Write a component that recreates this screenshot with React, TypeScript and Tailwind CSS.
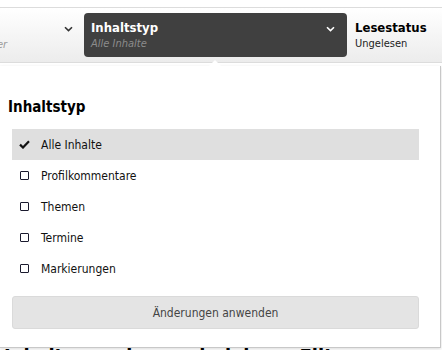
import { useState } from "react";

const font = { fontFamily: '"DejaVu Sans Condensed", "DejaVu Sans", Tahoma, sans-serif' };

const types = ["Alle Inhalte", "Profilkommentare", "Themen", "Termine", "Markierungen"];

function Chevron({ className }: { className: string }) {
  return (
    <svg width="9" height="6" viewBox="0 0 9 6" className={className}>
      <path d="M1 1.2 L4.5 4.6 L8 1.2" fill="none" stroke="currentColor" strokeWidth="1.6" />
    </svg>
  );
}

export default function App() {
  const [selected] = useState("Alle Inhalte");

  return (
    <div className="relative h-[350px] w-[442px] overflow-hidden bg-white" style={font}>
      {/* filter bar */}
      <div className="pt-[7px]">
        <div className="flex h-[56px] items-center border-y border-[#dcdcdc] bg-gradient-to-b from-white to-[#ececec]">
          <div className="relative flex h-[44px] w-[84px] items-start">
            <span className="absolute left-[-3px] top-[24px] text-[11px] italic text-[#9a9a9a]">er</span>
            <Chevron className="absolute left-[64px] top-[13px] text-[#333]" />
          </div>
          <div className="relative flex h-[44px] w-[263px] flex-col justify-center rounded-[4px] bg-[#404040] pl-[7px]">
            <span className="text-[13px] font-bold leading-[17px] text-white">Inhaltstyp</span>
            <span className="text-[11px] italic leading-[15px] text-[#8c8c8c]">Alle Inhalte</span>
            <Chevron className="absolute right-[12px] top-[13px] text-white" />
          </div>
          <div className="flex flex-col justify-center pl-[8px]">
            <span className="text-[13px] font-bold leading-[17px] text-black">Lesestatus</span>
            <span className="text-[11px] leading-[15px] text-[#222]">Ungelesen</span>
          </div>
        </div>
      </div>

      {/* page content underneath */}
      <div className="mt-[281px] px-[4px] text-[20px] font-bold leading-[24px] text-black">
        Inhalte werden nach deinem Filter angezeigt
      </div>

      {/* dropdown panel */}
      <div className="absolute left-0 top-[66px] h-[282px] w-[441px] border-r border-b border-[#c8c8c8] bg-white shadow-[0_1px_3px_rgba(0,0,0,0.15)]">
        <div className="absolute left-[209px] top-[-6px] h-0 w-0 border-x-[6px] border-b-[6px] border-x-transparent border-b-white" />
        <h3 className="pl-[8px] pt-[32px] text-[15px] font-bold leading-[18px] text-black">Inhaltstyp</h3>
        <ul className="mt-[13px] pl-[12px] pr-[21px]">
          {types.map((t) => {
            const on = t === selected;
            return (
              <li
                key={t}
                className={`flex h-[31px] items-center gap-[11px] pl-[7px] text-[12px] text-[#111] ${on ? "bg-[#dfdfdf]" : ""}`}
              >
                {on ? (
                  <svg width="11" height="9" viewBox="0 0 11 9">
                    <path d="M1 4.6 L4 7.5 L10 1.2" fill="none" stroke="#111" strokeWidth="2.2" />
                  </svg>
                ) : (
                  <span className="ml-[1px] mr-[1px] h-[9px] w-[9px] rounded-[1px] border-[1.5px] border-[#1a1a2e]" />
                )}
                <span>{t}</span>
              </li>
            );
          })}
        </ul>
        <div className="mt-[12px] pl-[12px] pr-[21px]">
          <button className="flex h-[33px] w-full items-center justify-center rounded-[3px] border border-[#dadada] bg-[#e4e4e4] text-[12px] text-[#444]">
            Änderungen anwenden
          </button>
        </div>
      </div>
    </div>
  );
}
